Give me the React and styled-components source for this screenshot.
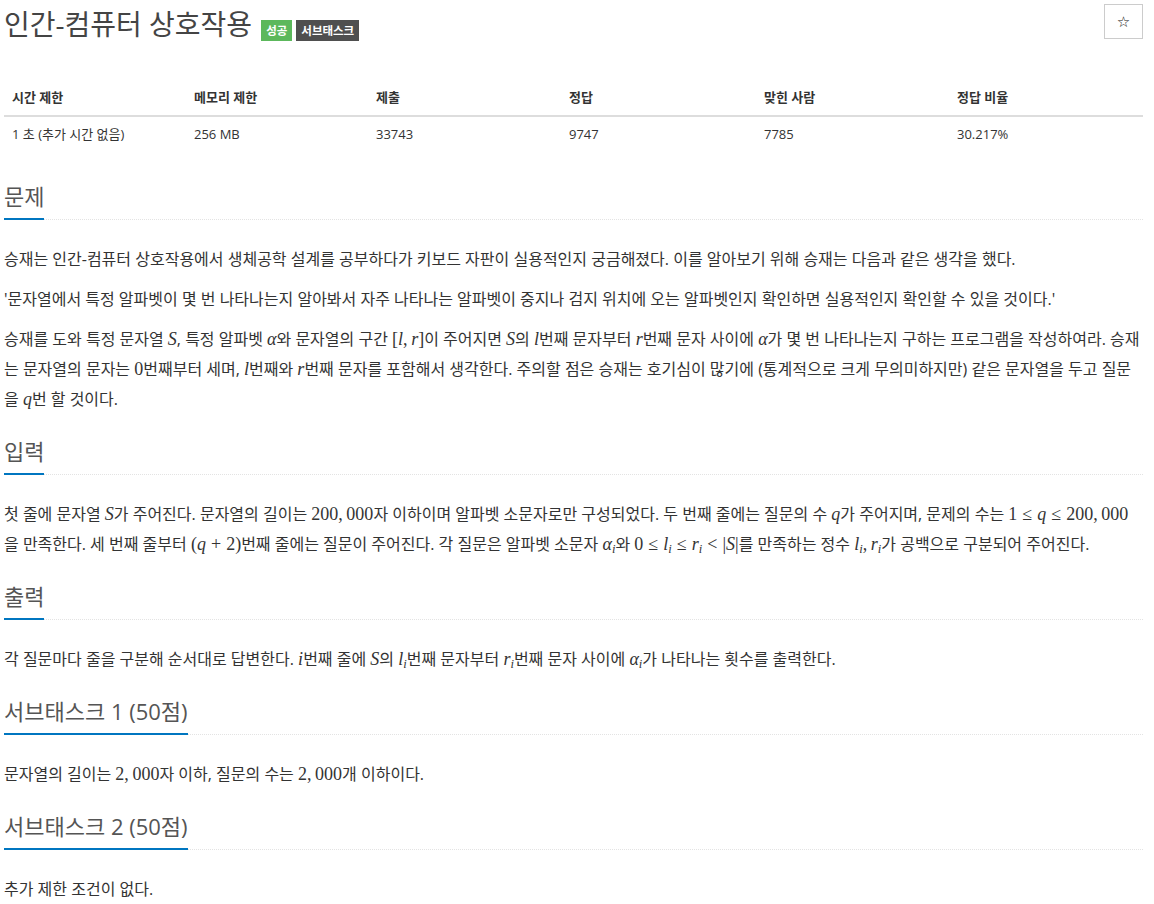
import React from 'react';
import styled, { createGlobalStyle } from 'styled-components';

const GlobalStyle = createGlobalStyle`
  body {
    margin: 0;
    background: #ffffff;
    font-family: "Open Sans", "Noto Sans CJK KR", sans-serif;
    color: #333333;
  }
`;

const Page = styled.div`
  padding: 4px 11px 20px 4px;
`;

const TitleBar = styled.div`
  display: flex;
  justify-content: space-between;
  align-items: flex-start;
`;

const TitleGroup = styled.div`
  display: flex;
  align-items: baseline;
  gap: 4px;
  margin-top: 4px;
`;

const Title = styled.h1`
  margin: 0 5px 0 0;
  font-size: 28px;
  line-height: 33px;
  font-weight: 400;
  color: #444444;
`;

const Badge = styled.span`
  display: inline-block;
  height: 21px;
  line-height: 21px;
  padding: 0 5px;
  font-size: 11.5px;
  font-weight: 700;
  color: #ffffff;
  background: ${({ $tone }) => ($tone === 'ok' ? '#5cb85c' : '#4f4f4f')};
`;

const StarButton = styled.button`
  width: 39px;
  height: 35px;
  border: 1px solid #cccccc;
  background: #ffffff;
  font-family: "DejaVu Sans", sans-serif;
  font-size: 15px;
  font-weight: 700;
  color: #111111;
  padding: 0;
`;

const InfoTable = styled.table`
  width: 100%;
  margin-top: 39px;
  border-collapse: collapse;
  table-layout: fixed;
  font-size: 13px;

  th {
    text-align: left;
    font-weight: 700;
    padding: 8px 8px;
    line-height: 19px;
    border-bottom: 2px solid #dddddd;
  }

  td {
    padding: 8px 8px;
    line-height: 18px;
  }
`;

const Section = styled.section`
  margin-top: ${({ $first }) => ($first ? '32px' : '24px')};
`;

const Headline = styled.div`
  border-bottom: 1px dotted #e3e3e3;
`;

const HeadlineText = styled.h2`
  display: inline-block;
  margin: 0 0 -1px;
  padding-bottom: 8px;
  font-size: 22px;
  line-height: 27px;
  font-weight: 400;
  color: #555555;
  border-bottom: 2px solid #0076c0;
`;

const Body = styled.div`
  padding-top: 24px;
`;

const Para = styled.p`
  margin: 0 0 10px;
  font-size: 16px;
  line-height: 30px;
  word-break: break-all;
`;

const MathSpan = styled.span`
  font-family: "Liberation Serif", "DejaVu Serif", serif;
  font-size: 18px;
  line-height: 0;
  white-space: nowrap;
`;

const V = styled.i`
  font-family: "Liberation Serif", "DejaVu Serif", serif;
  font-style: italic;
`;

const Sub = styled.sub`
  font-size: 0.7em;
  line-height: 0;
  vertical-align: -0.25em;
`;

const Op = styled.span`
  padding: 0 0.28em;
`;

const M = ({ children }) => <MathSpan>{children}</MathSpan>;

const columns = [
  ['시간 제한', '1 초 (추가 시간 없음)', 182],
  ['메모리 제한', '256 MB', 182],
  ['제출', '33743', 193],
  ['정답', '9747', 195],
  ['맞힌 사람', '7785', 193],
  ['정답 비율', '30.217%', null],
];

const Block = ({ title, first, children }) => (
  <Section $first={first}>
    <Headline>
      <HeadlineText>{title}</HeadlineText>
    </Headline>
    <Body>{children}</Body>
  </Section>
);

export default function App() {
  return (
    <Page>
      <GlobalStyle />
      <TitleBar>
        <TitleGroup>
          <Title>인간-컴퓨터 상호작용</Title>
          <Badge $tone="ok">성공</Badge>
          <Badge>서브태스크</Badge>
        </TitleGroup>
        <StarButton>☆</StarButton>
      </TitleBar>

      <InfoTable>
        <colgroup>
          {columns.map(([h, , w]) => (
            <col key={h} style={w ? { width: w } : undefined} />
          ))}
        </colgroup>
        <thead>
          <tr>
            {columns.map(([h]) => (
              <th key={h}>{h}</th>
            ))}
          </tr>
        </thead>
        <tbody>
          <tr>
            {columns.map(([h, v]) => (
              <td key={h}>{v}</td>
            ))}
          </tr>
        </tbody>
      </InfoTable>

      <Block title="문제" first>
        <Para>
          승재는 인간-컴퓨터 상호작용에서 생체공학 설계를 공부하다가 키보드 자판이 실용적인지 궁금해졌다. 이를 알아보기 위해 승재는 다음과 같은 생각을 했다.
        </Para>
        <Para>
          '문자열에서 특정 알파벳이 몇 번 나타나는지 알아봐서 자주 나타나는 알파벳이 중지나 검지 위치에 오는 알파벳인지 확인하면 실용적인지 확인할 수 있을 것이다.'
        </Para>
        <Para>
          승재를 도와 특정 문자열 <M><V>S</V></M>, 특정 알파벳 <M><V>α</V></M>와 문자열의 구간{' '}
          <M>[<V>l</V>,&thinsp;<V>r</V>]</M>이 주어지면 <M><V>S</V></M>의 <M><V>l</V></M>번째 문자부터{' '}
          <M><V>r</V></M>번째 문자 사이에 <M><V>α</V></M>가 몇 번 나타나는지 구하는 프로그램을 작성하여라. 승재는 문자열의 문자는{' '}
          <M>0</M>번째부터 세며, <M><V>l</V></M>번째와 <M><V>r</V></M>번째 문자를 포함해서 생각한다. 주의할 점은 승재는 호기심이 많기에 (통계적으로 크게 무의미하지만) 같은 문자열을 두고 질문을{' '}
          <M><V>q</V></M>번 할 것이다.
        </Para>
      </Block>

      <Block title="입력">
        <Para>
          첫 줄에 문자열 <M><V>S</V></M>가 주어진다. 문자열의 길이는 <M>200,&thinsp;000</M>자 이하이며 알파벳 소문자로만 구성되었다. 두 번째 줄에는 질문의 수{' '}
          <M><V>q</V></M>가 주어지며, 문제의 수는 <M>1<Op>≤</Op><V>q</V><Op>≤</Op>200,&thinsp;000</M>을 만족한다. 세 번째 줄부터{' '}
          <M>(<V>q</V><Op>+</Op>2)</M>번째 줄에는 질문이 주어진다. 각 질문은 알파벳 소문자 <M><V>α</V><Sub><V>i</V></Sub></M>와{' '}
          <M>0<Op>≤</Op><V>l</V><Sub><V>i</V></Sub><Op>≤</Op><V>r</V><Sub><V>i</V></Sub><Op>&lt;</Op>|<V>S</V>|</M>를 만족하는 정수{' '}
          <M><V>l</V><Sub><V>i</V></Sub>,&thinsp;<V>r</V><Sub><V>i</V></Sub></M>가 공백으로 구분되어 주어진다.
        </Para>
      </Block>

      <Block title="출력">
        <Para>
          각 질문마다 줄을 구분해 순서대로 답변한다. <M><V>i</V></M>번째 줄에 <M><V>S</V></M>의{' '}
          <M><V>l</V><Sub><V>i</V></Sub></M>번째 문자부터 <M><V>r</V><Sub><V>i</V></Sub></M>번째 문자 사이에{' '}
          <M><V>α</V><Sub><V>i</V></Sub></M>가 나타나는 횟수를 출력한다.
        </Para>
      </Block>

      <Block title="서브태스크 1 (50점)">
        <Para>
          문자열의 길이는 <M>2,&thinsp;000</M>자 이하, 질문의 수는 <M>2,&thinsp;000</M>개 이하이다.
        </Para>
      </Block>

      <Block title="서브태스크 2 (50점)">
        <Para>추가 제한 조건이 없다.</Para>
      </Block>
    </Page>
  );
}
